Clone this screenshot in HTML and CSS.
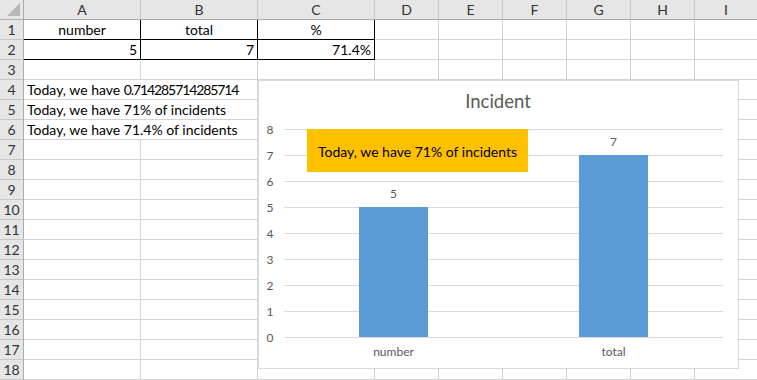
FILE: index.html
```html
<!DOCTYPE html>
<html lang="en">

<head>
    <meta charset="UTF-8">
    <meta name="viewport" content="width=device-width, initial-scale=1.0">
    <title>Book1</title>
    <link rel="stylesheet" href="styles.css">
</head>

<body>
    <div id="sheet">
        <div class="grid">
            <div class="corner">
                <svg width="24" height="20" viewBox="0 0 24 20"><polygon points="20,3 20,16 7,16" fill="#b7b7b7"/></svg>
            </div>
            <div class="col-head">A</div>
            <div class="col-head">B</div>
            <div class="col-head">C</div>
            <div class="col-head">D</div>
            <div class="col-head">E</div>
            <div class="col-head">F</div>
            <div class="col-head">G</div>
            <div class="col-head">H</div>
            <div class="col-head last">I</div>

            <div class="row-head">1</div>
            <div class="cell boxed center">number</div>
            <div class="cell boxed center">total</div>
            <div class="cell boxed center">%</div>
            <div class="cell"></div><div class="cell"></div><div class="cell"></div><div class="cell"></div><div class="cell"></div><div class="cell last"></div>

            <div class="row-head">2</div>
            <div class="cell boxed num">5</div>
            <div class="cell boxed num">7</div>
            <div class="cell boxed num">71.4%</div>
            <div class="cell"></div><div class="cell"></div><div class="cell"></div><div class="cell"></div><div class="cell"></div><div class="cell last"></div>

            <div class="row-head">3</div>
            <div class="cell"></div><div class="cell"></div><div class="cell"></div>
            <div class="cell"></div><div class="cell"></div><div class="cell"></div><div class="cell"></div><div class="cell"></div><div class="cell last"></div>

            <div class="row-head">4</div>
            <div class="cell wide">Today, we have <span class="digits">0.714285714285714</span></div>
            <div class="cell"></div>
            <div class="cell"></div><div class="cell"></div><div class="cell"></div><div class="cell"></div><div class="cell"></div><div class="cell last"></div>

            <div class="row-head">5</div>
            <div class="cell wide">Today, we have 71% of incidents</div>
            <div class="cell"></div>
            <div class="cell"></div><div class="cell"></div><div class="cell"></div><div class="cell"></div><div class="cell"></div><div class="cell last"></div>

            <div class="row-head">6</div>
            <div class="cell wide">Today, we have 71.4% of incidents</div>
            <div class="cell"></div>
            <div class="cell"></div><div class="cell"></div><div class="cell"></div><div class="cell"></div><div class="cell"></div><div class="cell last"></div>

            <div class="row-head">7</div>
            <div class="cell"></div><div class="cell"></div><div class="cell"></div>
            <div class="cell"></div><div class="cell"></div><div class="cell"></div><div class="cell"></div><div class="cell"></div><div class="cell last"></div>

            <div class="row-head">8</div>
            <div class="cell"></div><div class="cell"></div><div class="cell"></div>
            <div class="cell"></div><div class="cell"></div><div class="cell"></div><div class="cell"></div><div class="cell"></div><div class="cell last"></div>

            <div class="row-head">9</div>
            <div class="cell"></div><div class="cell"></div><div class="cell"></div>
            <div class="cell"></div><div class="cell"></div><div class="cell"></div><div class="cell"></div><div class="cell"></div><div class="cell last"></div>

            <div class="row-head">10</div>
            <div class="cell"></div><div class="cell"></div><div class="cell"></div>
            <div class="cell"></div><div class="cell"></div><div class="cell"></div><div class="cell"></div><div class="cell"></div><div class="cell last"></div>

            <div class="row-head">11</div>
            <div class="cell"></div><div class="cell"></div><div class="cell"></div>
            <div class="cell"></div><div class="cell"></div><div class="cell"></div><div class="cell"></div><div class="cell"></div><div class="cell last"></div>

            <div class="row-head">12</div>
            <div class="cell"></div><div class="cell"></div><div class="cell"></div>
            <div class="cell"></div><div class="cell"></div><div class="cell"></div><div class="cell"></div><div class="cell"></div><div class="cell last"></div>

            <div class="row-head">13</div>
            <div class="cell"></div><div class="cell"></div><div class="cell"></div>
            <div class="cell"></div><div class="cell"></div><div class="cell"></div><div class="cell"></div><div class="cell"></div><div class="cell last"></div>

            <div class="row-head">14</div>
            <div class="cell"></div><div class="cell"></div><div class="cell"></div>
            <div class="cell"></div><div class="cell"></div><div class="cell"></div><div class="cell"></div><div class="cell"></div><div class="cell last"></div>

            <div class="row-head">15</div>
            <div class="cell"></div><div class="cell"></div><div class="cell"></div>
            <div class="cell"></div><div class="cell"></div><div class="cell"></div><div class="cell"></div><div class="cell"></div><div class="cell last"></div>

            <div class="row-head">16</div>
            <div class="cell"></div><div class="cell"></div><div class="cell"></div>
            <div class="cell"></div><div class="cell"></div><div class="cell"></div><div class="cell"></div><div class="cell"></div><div class="cell last"></div>

            <div class="row-head">17</div>
            <div class="cell"></div><div class="cell"></div><div class="cell"></div>
            <div class="cell"></div><div class="cell"></div><div class="cell"></div><div class="cell"></div><div class="cell"></div><div class="cell last"></div>

            <div class="row-head">18</div>
            <div class="cell"></div><div class="cell"></div><div class="cell"></div>
            <div class="cell"></div><div class="cell"></div><div class="cell"></div><div class="cell"></div><div class="cell"></div><div class="cell last"></div>
        </div>

        <!-- chart floats over the cells, like in Excel -->
        <div class="chart">
            <svg width="479" height="287" viewBox="0 0 479 287">
                <text class="title" x="239" y="27" text-anchor="middle">Incident</text>

                <g class="gridlines">
                    <line x1="25" x2="464" y1="48.5" y2="48.5"/>
                    <line x1="25" x2="464" y1="74.5" y2="74.5"/>
                    <line x1="25" x2="464" y1="100.5" y2="100.5"/>
                    <line x1="25" x2="464" y1="126.5" y2="126.5"/>
                    <line x1="25" x2="464" y1="152.5" y2="152.5"/>
                    <line x1="25" x2="464" y1="178.5" y2="178.5"/>
                    <line x1="25" x2="464" y1="204.5" y2="204.5"/>
                    <line x1="25" x2="464" y1="230.5" y2="230.5"/>
                </g>

                <g class="axis" text-anchor="middle">
                    <text x="11" y="53">8</text>
                    <text x="11" y="79">7</text>
                    <text x="11" y="105">6</text>
                    <text x="11" y="131">5</text>
                    <text x="11" y="157">4</text>
                    <text x="11" y="183">3</text>
                    <text x="11" y="209">2</text>
                    <text x="11" y="235">1</text>
                    <text x="11" y="261">0</text>
                </g>

                <rect class="bar" x="100" y="126" width="69" height="130"/>
                <rect class="bar" x="320" y="74" width="69" height="182"/>
                <line class="base" x1="25" x2="464" y1="256.5" y2="256.5"/>

                <g class="label" text-anchor="middle">
                    <text x="134.5" y="117">5</text>
                    <text x="354.5" y="65">7</text>
                    <text x="134.5" y="275">number</text>
                    <text x="354.5" y="275">total</text>
                </g>

                <rect class="callout" x="48" y="48" width="221" height="43"/>
                <text class="callout-text" x="158.5" y="76" text-anchor="middle">Today, we have 71% of incidents</text>
            </svg>
        </div>
    </div>
</body>

</html>
```

FILE: styles.css
```css
* {
    padding: 0;
    margin: 0;
    box-sizing: border-box;
}

body {
    background: #fff;
    font-family: Lato, "Liberation Sans", sans-serif;
    font-size: 14px;
    color: #000;
    overflow: hidden;
}

#sheet {
    position: relative;
    width: 757px;
    height: 380px;
    overflow: hidden;
}

.grid {
    display: grid;
    grid-template-columns: 24px 117px 117px 117px 64px 64px 64px 64px 64px 1fr;
    grid-auto-rows: 20px;
}

.corner {
    background: #e6e6e6;
    border-right: 1px solid #ababab;
    border-bottom: 1px solid #ababab;
}

.corner svg {
    display: block;
}

.col-head {
    background: #e6e6e6;
    border-right: 1px solid #c6c6c6;
    border-bottom: 1px solid #ababab;
    text-align: center;
    line-height: 19px;
    color: #333;
}

.col-head.last {
    border-right: none;
}

.row-head {
    background: #e6e6e6;
    border-right: 1px solid #ababab;
    border-bottom: 1px solid #c6c6c6;
    text-align: center;
    line-height: 20px;
    color: #333;
}

.cell {
    border-right: 1px solid #d4d4d4;
    border-bottom: 1px solid #d4d4d4;
    line-height: 20px;
    padding: 0 3px;
    white-space: nowrap;
}

.cell.last {
    border-right: none;
}

.cell.boxed {
    border-right-color: #000;
    border-bottom-color: #000;
}

.center {
    text-align: center;
}

.num {
    text-align: right;
}

.wide {
    grid-column: span 2;
}

.digits {
    letter-spacing: -1.1px;
}

.chart {
    position: absolute;
    left: 258px;
    top: 80px;
    width: 481px;
    height: 289px;
    background: #fff;
    border: 1px solid #d9d9d9;
}

.chart svg {
    display: block;
}

.title {
    font-size: 18.5px;
    fill: #595959;
}

.gridlines line,
.base {
    stroke: #d9d9d9;
    stroke-width: 1;
}

.axis text,
.label text {
    font-size: 12px;
    fill: #595959;
}

.bar {
    fill: #5b9bd5;
}

.callout {
    fill: #ffc000;
}

.callout-text {
    font-size: 14px;
    fill: #000;
}
```
